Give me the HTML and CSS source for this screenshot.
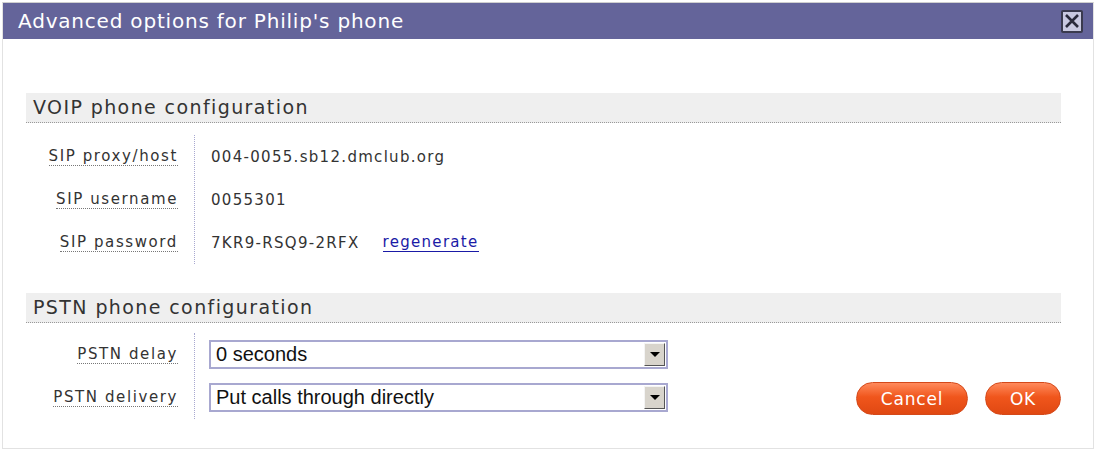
FILE: index.html
```html
<!DOCTYPE html>
<html lang="en">
<head>
    <meta charset="UTF-8">
    <title>Advanced options</title>
    <link rel="stylesheet" href="styles.css">
</head>
<body>
    <div class="dialog">
        <div class="titlebar">
            <span class="title">Advanced options for Philip's phone</span>
            <span class="close">
                <svg width="18" height="18" viewBox="0 0 18 18"><path d="M3 3L15 15M15 3L3 15" stroke="#2a2a3a" stroke-width="2.6"/></svg>
            </span>
        </div>
        <div class="content">
            <h2 class="section">VOIP phone configuration</h2>
            <div class="fields">
                <div class="labels">
                    <div class="row"><span class="lbl">SIP proxy/host</span></div>
                    <div class="row"><span class="lbl">SIP username</span></div>
                    <div class="row"><span class="lbl">SIP password</span></div>
                </div>
                <div class="values">
                    <div class="row">004-0055.sb12.dmclub.org</div>
                    <div class="row">0055301</div>
                    <div class="row">7KR9-RSQ9-2RFX <a href="#" class="regen">regenerate</a></div>
                </div>
            </div>

            <h2 class="section second">PSTN phone configuration</h2>
            <div class="bottom">
                <div class="fields pstn">
                    <div class="labels">
                        <div class="row"><span class="lbl">PSTN delay</span></div>
                        <div class="row"><span class="lbl">PSTN delivery</span></div>
                    </div>
                    <div class="values">
                        <div class="row">
                            <div class="select"><span>0 seconds</span><span class="arrow"></span></div>
                        </div>
                        <div class="row">
                            <div class="select"><span>Put calls through directly</span><span class="arrow"></span></div>
                        </div>
                    </div>
                </div>
                <div class="buttons">
                    <button class="btn cancel">Cancel</button>
                    <button class="btn ok">OK</button>
                </div>
            </div>
        </div>
    </div>
</body>
</html>
```

FILE: styles.css
```css
body {
    margin: 0;
    background-color: white;
    font-family: "DejaVu Sans", Verdana, sans-serif;
    color: #333;
}
.dialog {
    margin: 2px 3px 0 2px;
    height: 447px;
    border: 1px solid #e2e2e2;
    border-top-color: #cfcfcf;
    box-sizing: border-box;
}
.titlebar {
    height: 36px;
    background-color: #64649a;
    display: flex;
    align-items: center;
    justify-content: space-between;
    padding: 0 10px 0 15px;
}
.title {
    color: white;
    font-size: 20px;
    letter-spacing: 0.8px;
}
.close {
    width: 18px;
    height: 19px;
    background-color: #c9c9e0;
    border: 2px solid #3a3a4e;
    border-radius: 2px;
    display: flex;
    align-items: center;
    justify-content: center;
}
.content {
    padding: 54px 32px 0 23px;
}
.section {
    margin: 0;
    height: 29px;
    line-height: 29px;
    background-color: #efefef;
    border-bottom: 1px dotted #999;
    font-size: 19px;
    font-weight: normal;
    letter-spacing: 1.4px;
    color: #333;
    padding-left: 7px;
}
.section.second {
    margin-top: 29px;
}
.fields {
    display: flex;
    padding-top: 12px;
}
.labels {
    width: 152px;
    padding-right: 16px;
    text-align: right;
    border-right: 1px dotted #a8a8d0;
}
.values {
    padding-left: 16px;
}
.row {
    height: 43px;
    font-size: 15px;
    letter-spacing: 1.3px;
    display: flex;
    align-items: center;
}
.labels .row {
    justify-content: flex-end;
    letter-spacing: 1.6px;
}
.lbl {
    border-bottom: 1px dotted #777;
    line-height: 17px;
}
.regen {
    color: #1a1aa6;
    margin-left: 23px;
    text-decoration: none;
    border-bottom: 1px solid #1a1aa6;
    line-height: 17px;
}
.bottom {
    display: flex;
    justify-content: space-between;
    align-items: flex-end;
}
.pstn {
    padding-top: 10px;
}
.select {
    width: 450px;
    height: 25px;
    margin-left: -2px;
    border: 2px solid #a8a8d0;
    display: flex;
    justify-content: space-between;
    align-items: center;
    font-family: "Liberation Sans", Arial, sans-serif;
    font-size: 20px;
    letter-spacing: 0;
    color: #111;
    padding-left: 5px;
    box-sizing: content-box;
}
.arrow {
    width: 19px;
    height: 21px;
    margin-right: 1px;
    background-color: #d8d4cc;
    border: 1px solid #f4f4f4;
    border-right-color: #555;
    border-bottom-color: #555;
    position: relative;
}
.arrow::after {
    content: "";
    position: absolute;
    left: 5px;
    top: 8px;
    border-left: 5px solid transparent;
    border-right: 5px solid transparent;
    border-top: 5px solid black;
}
.buttons {
    display: flex;
    gap: 17px;
    padding-bottom: 4px;
}
.btn {
    height: 33px;
    border: 1px solid #d4491a;
    border-radius: 17px;
    background: linear-gradient(#ff8a5c, #f0561c 45%, #e04812);
    color: white;
    font-family: "DejaVu Sans", Verdana, sans-serif;
    font-size: 17px;
    letter-spacing: 0.8px;
    cursor: pointer;
}
.cancel {
    width: 112px;
}
.ok {
    width: 76px;
}
```
